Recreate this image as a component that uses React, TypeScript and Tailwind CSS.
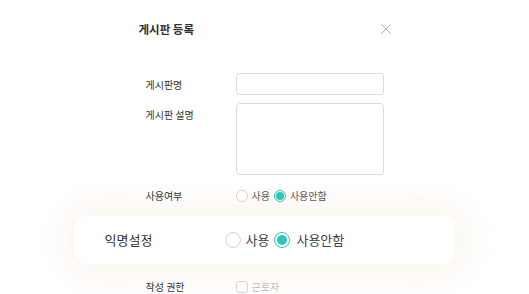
import { X } from "lucide-react"

function Radio({ checked, big }: { checked?: boolean; big?: boolean }) {
  if (big) {
    return checked ? (
      <span className="flex h-4 w-4 items-center justify-center rounded-full border-[1.5px] border-[#2cc6bd]">
        <span className="h-[10px] w-[10px] rounded-full bg-[#2cc6bd]" />
      </span>
    ) : (
      <span className="h-4 w-4 rounded-full border border-[#d4d4d4] bg-white" />
    )
  }
  return checked ? (
    <span className="flex h-3 w-3 items-center justify-center rounded-full border border-[#2cc6bd]">
      <span className="h-[8px] w-[8px] rounded-full bg-[#2cc6bd]" />
    </span>
  ) : (
    <span className="h-3 w-3 rounded-full border border-[#d4d4d4] bg-white" />
  )
}

export default function App() {
  return (
    <div
      className="flex min-h-[294px] w-full flex-col items-center overflow-hidden bg-white text-[#333]"
      style={{ fontFamily: "'Noto Sans CJK KR', 'Noto Sans', sans-serif" }}
    >
      <div className="w-[252px] pt-[20px]">
        <div className="flex items-center justify-between">
          <p className="text-[11.5px] font-bold leading-4 text-[#333]">게시판 등록</p>
          <X className="-mr-[4px] h-[18px] w-[18px] text-[#9a9a9a]" strokeWidth={1} />
        </div>

        <div className="mt-[35px] flex items-center pl-[7px]">
          <p className="w-[90px] text-[10px] text-[#333]">게시판명</p>
          <div className="h-[22px] w-[148px] rounded-[4px] border border-[#dcdcdc]" />
        </div>

        <div className="mt-[8px] flex pl-[7px]">
          <p className="w-[90px] pt-[4px] text-[10px] text-[#333]">게시판 설명</p>
          <div className="h-[72px] w-[148px] rounded-[4px] border border-[#dcdcdc]" />
        </div>

        <div className="mt-[13px] flex items-center pl-[7px]">
          <p className="w-[90px] text-[10px] text-[#333]">사용여부</p>
          <div className="flex items-center text-[10px] text-[#555]">
            <Radio />
            <span className="ml-[4px]">사용</span>
            <span className="ml-[4px]">
              <Radio checked />
            </span>
            <span className="ml-[4px]">사용안함</span>
          </div>
        </div>

        <div className="-mx-[64px] mt-[13px] flex h-[48px] items-center rounded-[12px] bg-white pl-[30px] shadow-[0_0_36px_10px_rgba(236,205,170,0.2)]">
          <p className="w-[120px] text-[13px] text-[#333]">익명설정</p>
          <div className="flex items-center text-[13px] text-[#444]">
            <Radio big />
            <span className="ml-[5px]">사용</span>
            <span className="ml-[5px]">
              <Radio big checked />
            </span>
            <span className="ml-[6px]">사용안함</span>
          </div>
        </div>

        <div className="mt-[15px] flex items-center pl-[7px]">
          <p className="w-[90px] text-[10px] text-[#333]">작성 권한</p>
          <div className="flex items-center text-[10px] text-[#bbb]">
            <span className="h-3 w-3 rounded-[3px] border border-[#d4d4d4]" />
            <span className="ml-[4px]">근로자</span>
          </div>
        </div>
      </div>
    </div>
  )
}
